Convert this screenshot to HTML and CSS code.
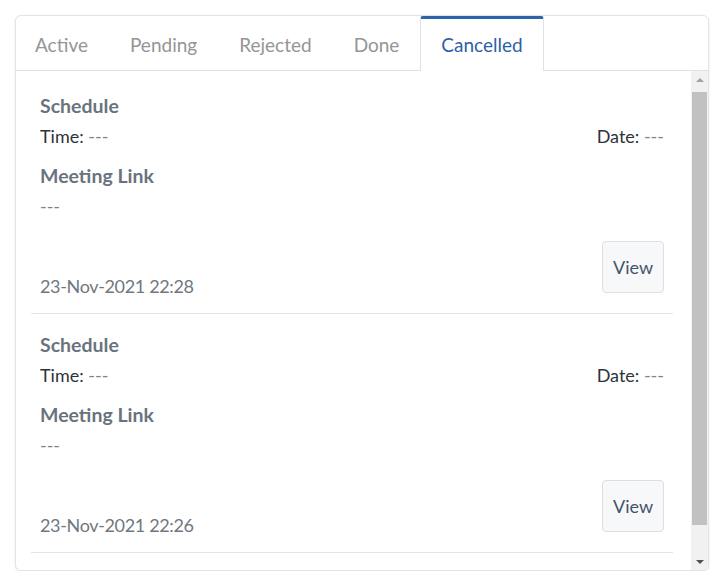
FILE: index.html
```html
<!DOCTYPE html>
<html>
<head>
<meta charset="utf-8">
<link rel="stylesheet" href="styles.css">
</head>
<body>
<div class="card">
  <div class="tabs">
    <div class="tab">Active</div>
    <div class="tab">Pending</div>
    <div class="tab">Rejected</div>
    <div class="tab">Done</div>
    <div class="tab active">Cancelled</div>
  </div>
  <div class="body">
    <div class="list">
      <div class="item">
        <div class="heading">Schedule</div>
        <div class="row">
          <div><span class="label">Time:</span> <span class="muted">---</span></div>
          <div><span class="label">Date:</span> <span class="muted">---</span></div>
        </div>
        <div class="heading mt">Meeting Link</div>
        <div class="muted">---</div>
        <div class="foot">
          <div class="stamp">23-Nov-2021 22:28</div>
          <button class="btn">View</button>
        </div>
      </div>
      <div class="item">
        <div class="heading">Schedule</div>
        <div class="row">
          <div><span class="label">Time:</span> <span class="muted">---</span></div>
          <div><span class="label">Date:</span> <span class="muted">---</span></div>
        </div>
        <div class="heading mt">Meeting Link</div>
        <div class="muted">---</div>
        <div class="foot">
          <div class="stamp">23-Nov-2021 22:26</div>
          <button class="btn">View</button>
        </div>
      </div>
    </div>
    <div class="scrollbar">
      <div class="arrow up"></div>
      <div class="track"><div class="thumb"></div></div>
      <div class="arrow down"></div>
    </div>
  </div>
</div>
</body>
</html>
```

FILE: styles.css
```css
html, body {
  margin: 0;
  padding: 0;
  background: #ffffff;
}
body {
  font-family: "Lato", "Liberation Sans", sans-serif;
  font-size: 18px;
  color: #333a40;
}
.card {
  margin: 15px 0 0 15px;
  width: 694px;
  height: 556px;
  box-sizing: border-box;
  border: 1px solid #e2e4e7;
  border-radius: 6px;
  box-shadow: 0 1px 3px rgba(0,0,0,0.08);
  display: flex;
  flex-direction: column;
  overflow: hidden;
  background: #fff;
}
.tabs {
  display: flex;
  height: 55px;
  box-sizing: border-box;
  border-bottom: 1px solid #dee2e6;
  flex: none;
}
.tab {
  padding: 0 20px 2px 20px;
  border: 1px solid transparent;
  border-top: 3px solid transparent;
  border-bottom: none;
  display: flex;
  align-items: center;
  color: #959595;
  font-size: 19px;
  height: 55px;
  box-sizing: border-box;
}
.tab:first-child {
  margin-left: -2px;
}
.tab.active {
  color: #2f5fa6;
  border-color: #dee2e6;
  border-top-color: #2d62ad;
  border-radius: 3px 3px 0 0;
  background: #fff;
}
.body {
  flex: 1;
  display: flex;
  min-height: 0;
}
.list {
  flex: 1;
  padding: 4px 18px 0 15px;
  overflow: hidden;
}
.item {
  padding: 16px 9px 12px 9px;
  border-bottom: 1px solid #e3e5e8;
  line-height: 30px;
}
.heading {
  font-weight: 700;
  font-size: 19.5px;
  color: #6a737d;
}
.mt {
  margin-top: 10px;
}
.row {
  display: flex;
  justify-content: space-between;
}
.label {
  color: #2f3337;
}
.muted {
  color: #7b838b;
}
.foot {
  display: flex;
  justify-content: space-between;
  align-items: flex-end;
  margin-top: 20px;
}
.stamp {
  color: #6f7780;
  letter-spacing: -0.35px;
}
.btn {
  font-family: inherit;
  font-size: 18px;
  color: #44546a;
  background: #f7f8fa;
  border: 1px solid #dcdfe3;
  border-radius: 4px;
  width: 62px;
  height: 52px;
  padding: 0;
  margin-bottom: 8px;
}
.scrollbar {
  width: 17px;
  flex: none;
  background: #f1f1f1;
  display: flex;
  flex-direction: column;
}
.arrow {
  height: 17px;
  display: flex;
  align-items: center;
  justify-content: center;
}
.arrow::before {
  content: "";
  border-left: 4px solid transparent;
  border-right: 4px solid transparent;
}
.arrow.up::before {
  border-bottom: 4px solid #a3a3a3;
}
.arrow.down::before {
  border-top: 4px solid #505050;
}
.track {
  flex: 1;
  padding: 4px 1px 28px 1px;
  display: flex;
}
.thumb {
  flex: 1;
  background: #c1c1c1;
}
```
